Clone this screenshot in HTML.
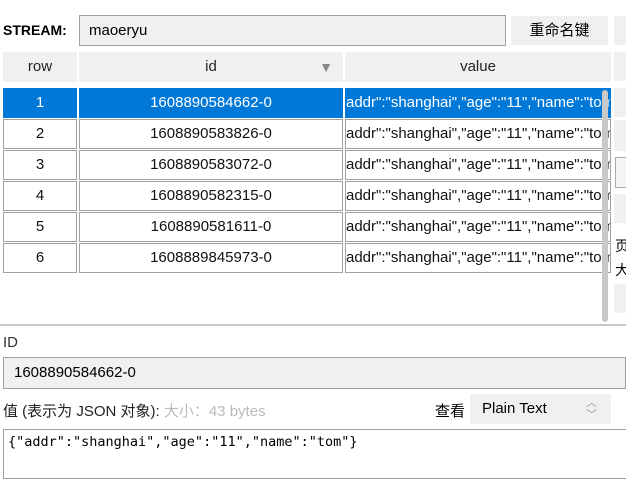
<!DOCTYPE html><html><head><meta charset="utf-8"><style>
body{margin:0;width:626px;height:470px;overflow:hidden;background:#fff;font-family:"Liberation Sans","Noto Sans CJK SC",sans-serif;font-size:15px;color:#000;position:relative}
.a{position:absolute;box-sizing:border-box}
.g{background:#f0f0f0}
.h{background:#f0f0f0;text-align:center;line-height:30px;color:#222}
.c{background:#fff;border:1px solid #a0a0a0;text-align:center;line-height:28px;white-space:nowrap;overflow:hidden;color:#111}
.s{background:#0078d7;color:#fff;border-color:#0078d7}
.v{text-align:left;padding-left:0}
</style></head><body>
<div class="a" style="left:3px;top:22px;font-weight:bold;font-size:14px">STREAM:</div>
<div class="a g" style="left:79px;top:15px;width:427px;height:31px;border:1px solid #a0a0a0;padding-left:9px;line-height:29px">maoeryu</div>
<div class="a g" style="left:511px;top:16px;width:97px;height:29px;text-align:center;line-height:29px">重命名键</div>
<div class="a h" style="left:3px;top:52px;width:74px;height:30px">row</div>
<div class="a h" style="left:79px;top:52px;width:264px;height:30px">id<span style="position:absolute;right:10px;top:0;color:#888;font-size:14px">▼</span></div>
<div class="a h" style="left:345px;top:52px;width:266px;height:30px">value</div>
<div class="a c s" style="left:3px;top:88px;width:74px;height:30px">1</div>
<div class="a c s" style="left:79px;top:88px;width:264px;height:30px">1608890584662-0</div>
<div class="a c s v" style="left:345px;top:88px;width:266px;height:30px">addr":"shanghai","age":"11","name":"tom"</div>
<div class="a c" style="left:3px;top:119px;width:74px;height:30px">2</div>
<div class="a c" style="left:79px;top:119px;width:264px;height:30px">1608890583826-0</div>
<div class="a c v" style="left:345px;top:119px;width:266px;height:30px">addr":"shanghai","age":"11","name":"tom"</div>
<div class="a c" style="left:3px;top:150px;width:74px;height:30px">3</div>
<div class="a c" style="left:79px;top:150px;width:264px;height:30px">1608890583072-0</div>
<div class="a c v" style="left:345px;top:150px;width:266px;height:30px">addr":"shanghai","age":"11","name":"tom"</div>
<div class="a c" style="left:3px;top:181px;width:74px;height:30px">4</div>
<div class="a c" style="left:79px;top:181px;width:264px;height:30px">1608890582315-0</div>
<div class="a c v" style="left:345px;top:181px;width:266px;height:30px">addr":"shanghai","age":"11","name":"tom"</div>
<div class="a c" style="left:3px;top:212px;width:74px;height:30px">5</div>
<div class="a c" style="left:79px;top:212px;width:264px;height:30px">1608890581611-0</div>
<div class="a c v" style="left:345px;top:212px;width:266px;height:30px">addr":"shanghai","age":"11","name":"tom"</div>
<div class="a c" style="left:3px;top:243px;width:74px;height:30px">6</div>
<div class="a c" style="left:79px;top:243px;width:264px;height:30px">1608889845973-0</div>
<div class="a c v" style="left:345px;top:243px;width:266px;height:30px">addr":"shanghai","age":"11","name":"tom"</div>
<div class="a" style="left:602px;top:90px;width:6px;height:232px;background:#c8c8c8;border-radius:3px"></div>
<div class="a g" style="left:614px;top:16px;width:12px;height:29px"></div>
<div class="a g" style="left:614px;top:52px;width:12px;height:29px"></div>
<div class="a g" style="left:614px;top:88px;width:12px;height:29px"></div>
<div class="a g" style="left:614px;top:120px;width:12px;height:31px"></div>
<div class="a" style="left:615px;top:157px;width:12px;height:31px;border:1px solid #aaa;background:#f5f5f5"></div>
<div class="a g" style="left:614px;top:194px;width:12px;height:29px"></div>
<div class="a" style="left:615px;top:236px;font-size:14px">页</div>
<div class="a" style="left:615px;top:260px;font-size:14px">大</div>
<div class="a g" style="left:614px;top:284px;width:12px;height:29px"></div>
<div class="a" style="left:0;top:324px;width:626px;height:2px;background:#c8c8c8"></div>
<div class="a" style="left:3px;top:334px;color:#333">ID</div>
<div class="a g" style="left:3px;top:357px;width:623px;height:32px;border:1px solid #a0a0a0;padding-left:10px;line-height:30px">1608890584662-0</div>
<div class="a" style="left:3px;top:400px;color:#222">值 (表示为 JSON 对象): <span style="color:#bbb">大小：43 bytes</span></div>
<div class="a" style="left:435px;top:400px">查看</div>
<div class="a g" style="left:470px;top:394px;width:141px;height:30px;padding-left:12px;line-height:30px">Plain Text<span style="position:absolute;right:14px;top:0;color:#999;font-size:11px;line-height:12px;padding-top:3px">︿<br>﹀</span></div>
<div class="a" style="left:3px;top:429px;width:630px;height:50px;border:1px solid #a0a0a0;padding:4px 0 0 4px;font-family:'DejaVu Sans Mono','Liberation Mono',monospace;font-size:13.5px">{"addr":"shanghai","age":"11","name":"tom"}</div>
</body></html>
